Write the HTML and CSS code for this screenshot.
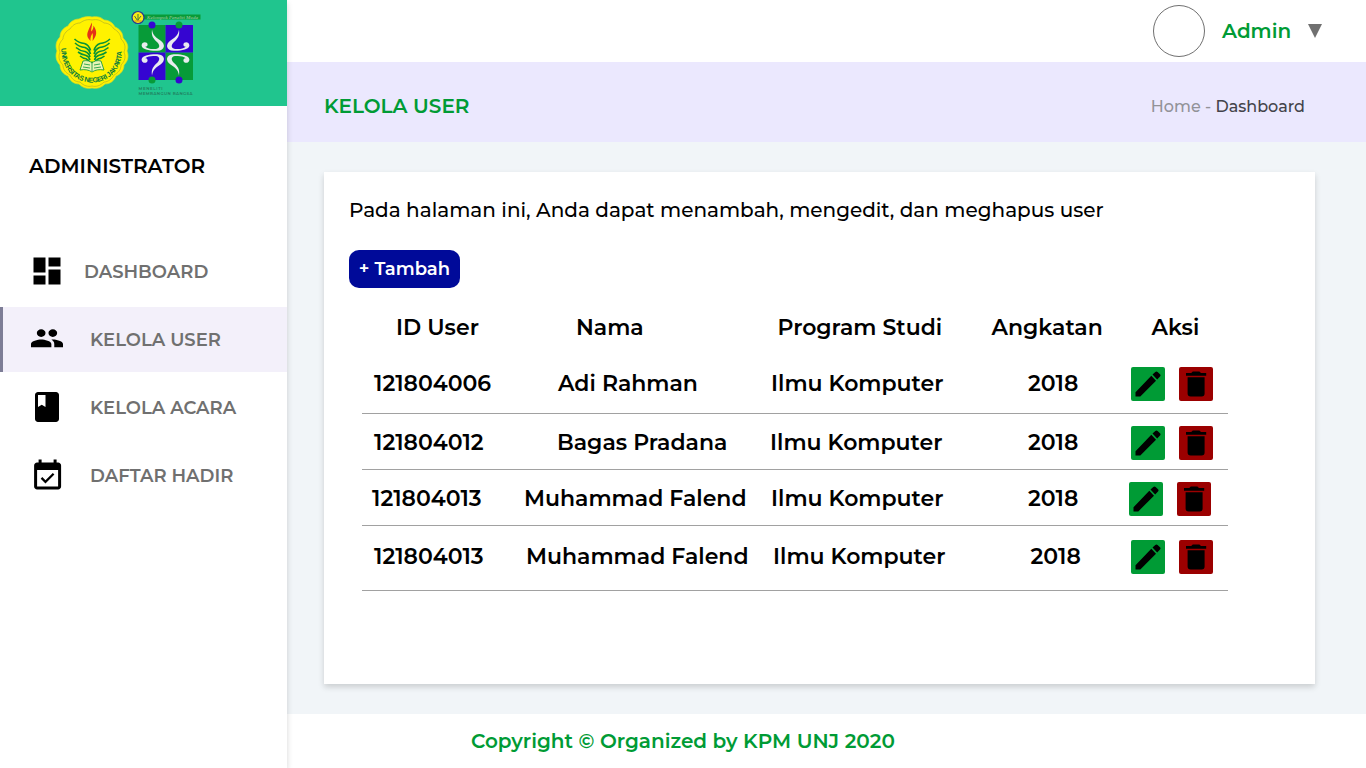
FILE: index.html
```html
<!DOCTYPE html>
<html lang="id">
<head>
<meta charset="utf-8">
<title>Kelola User</title>
<link rel="stylesheet" href="styles.css">
</head>
<body>
<svg width="0" height="0" class="sprite">
  <symbol id="pencil" viewBox="0 0 34 34"><path d="M4.500 25.200v4.200h4.800L25 13.700l-4.700-4.900zM21.500 7.500l4.700 4.900 2.800-2.900c.7-.7.7-1.500 0-2.200l-2.400-2.400c-.7-.7-1.600-.7-2.300 0z"/></symbol>
  <symbol id="trash" viewBox="0 0 34 34"><path d="M8.600 10.300h17v16.200a3 3 0 0 1-3 3h-11a3 3 0 0 1-3-3zM7 6h5.200l1.600-1.500h6.600L22 6h5.200v2.700H7z"/></symbol>
</svg>
<div class="app">
  <aside class="sidebar">
    <div class="brand">
      <svg width="287" height="106" viewBox="0 0 287 106">
        <defs>
          <path id="arc" d="M61.500 47C60 66 73 82.500 92 82.500S124 66 121.500 47"/>
          <path id="leaf" fill="none" stroke="#079437" stroke-width="1.600" d="M74.500 39q4 4 10 4.500 4.500 1.500 6 7M75 43q4 4 10 4.500 4 1.500 5.500 6.500M76 47.500q4 3.500 9 4 4 1.500 5 5.500M78 52q4 3 7.500 3.300 3.500 1 4.500 4.700M80 56q3 2.500 6 2.700 2.500 1 4 4.300"/>
        </defs>
        <path class="seal" d="M92 17c5-1 9 0 12 3 5 0 9 3 11 7 5 2 8 6 8 11 4 4 6 8 4 13 2 5 1 10-3 14 0 5-3 9-8 11-2 5-6 8-11 8-4 4-8 5-13 4-5 1-9 0-13-4-5 0-9-3-11-8-5-2-8-6-8-11-4-4-5-9-3-14-2-5-1-10 3-14 0-5 3-9 8-11 2-4 6-7 11-7 4-2 8-3 13-2z"/>
        <path class="seal-line" d="M92 20c5-1 8 0 12 3 5 0 8 3 10 6 4 2 7 6 7 10 4 4 5 8 3 13 2 5 1 9-3 13 0 5-3 8-7 10-2 4-6 7-10 7-4 4-8 5-12 4-4 1-8 0-12-4-5 0-8-3-10-7-4-2-7-5-7-10-4-4-5-8-3-13-2-5-1-9 3-13 0-4 3-8 7-10 2-3 5-6 10-6 4-3 8-4 12-3z"/>
        <use href="#leaf"/><use href="#leaf" transform="translate(184.500) scale(-1 1)"/>
        <path fill="#e53217" d="M90.500 41c-6-6-2.500-9 1.300-18.500.7 4-1.300 6-.3 9 1-2 2-3 2-6 4 6 3.500 10-1 15.500.5-3 .4-5 .1-8-1.400 2-2.500 4.800-2.100 8z"/>
        <path d="M83 61c4-1 7 0 9 2 2-2 5-3 9-2l3 9c-5-1-9 0-12 2-3-2-7-3-12-2z" fill="#e9f4b5" stroke="#079437" stroke-width=".8"/><path d="M92 61v10M84 64l6 1M83 67l7 1M94 65l6-1M94 68l7-1" stroke="#079437" stroke-width=".8"/>
        <text class="seal-text"><textPath href="#arc" textLength="100" startOffset="1">UNIVERSITAS NEGERI JAKARTA</textPath></text>
        <path fill="#089b37" d="M144 14.500h56.500v5H144z"/>
        <text class="banner-text" x="147" y="19" textLength="51" lengthAdjust="spacingAndGlyphs">Kelompok Peneliti Muda</text>
        <circle cx="138" cy="17.500" r="6" fill="#f9ea17" stroke="#253594" stroke-width="1.200"/><path d="M134.500 16l3 4.500 3.500-4.500M138 14v7" fill="none" stroke="#477734"/><path d="M134.500 21h7" stroke="#dda815" stroke-width="1.400"/>
        <path fill="#079b38" d="M138.500 25h27v27.500h-27zM165.500 52.500H193V80h-27.500z"/>
        <path fill="#3505d1" d="M165.500 25H193v27.500h-27.500zM138.500 52.500h27V80h-27z"/>
        <g fill="#e9ecef">
          <path id="fig" d="M152 29.500c.8 6 4.500 8.500 8.500 11 5.200 3.500 4.800 10-3 10.300-7 .3-15.700-1-15.900-5.200-.1-4.300 5.900-4.400 6-1 .1 1.700-1.400 2.300-2.400 2.200 2.500 2.200 7 2.600 10.800 2.100 4.200-.6 3.900-3.900 1.500-6.400-3.800-3.700-6.500-6-5.500-13z"/>
          <use href="#fig" transform="translate(331) scale(-1 1)"/>
          <use href="#fig" transform="translate(0 105) scale(1 -1)"/>
          <use href="#fig" transform="translate(331 105) scale(-1 -1)"/>
        </g>
        <circle cx="152" cy="25" r="3.500" fill="#3505d1"/><circle cx="179" cy="25" r="3.500" fill="#079b38"/><circle cx="152" cy="80" r="3.500" fill="#079b38"/><circle cx="179" cy="80" r="3.500" fill="#3505d1"/>
        <text class="motto" x="138.500" y="90" textLength="24">MENELITI</text><text class="motto" x="138.500" y="95" textLength="54">MEMBANGUN BANGSA</text>
      </svg>
    </div>
    <h2 class="role">ADMINISTRATOR</h2>
    <nav class="nav">
      <a class="nav-item first"><svg width="36" height="36" viewBox="0 0 36 36"><path d="M4.500 4.500h12v15h-12zM19.500 4.500h12v9h-12zM4.500 22.500h12v9h-12zM19.500 16.500h12v15h-12z"/></svg><span>DASHBOARD</span></a>
      <a class="nav-item active"><svg width="36" height="36" viewBox="0 0 24 24"><path d="M16 11c1.660 0 2.990-1.340 2.990-3S17.660 5 16 5s-3 1.340-3 3 1.340 3 3 3zm-8 0c1.660 0 2.990-1.340 2.990-3S9.660 5 8 5 5 6.340 5 8s1.340 3 3 3zm0 2c-2.330 0-7 1.170-7 3.500V19h14v-2.500c0-2.330-4.670-3.500-7-3.500zm8 0c-.29 0-.62.02-.97.05 1.160.84 1.970 1.970 1.970 3.450V19h6v-2.500c0-2.330-4.670-3.500-7-3.500z" transform="matrix(.97 0 0 .86 .36 1.800)"/></svg><span>KELOLA USER</span></a>
      <a class="nav-item raised"><svg width="36" height="36" viewBox="0 0 24 24"><path d="M18 2H6c-1.100 0-2 .9-2 2v16c0 1.100.9 2 2 2h12c1.100 0 2-.9 2-2V4c0-1.100-.9-2-2-2zM6 4h5v8l-2.500-1.500L6 12z"/></svg><span>KELOLA ACARA</span></a>
      <a class="nav-item raised"><svg width="36" height="36" viewBox="0 0 24 24"><path d="M16.530 11.060L15.470 10l-4.880 4.880-2.120-2.120-1.060 1.060L10.590 17l5.940-5.940zM19 3h-1V1h-2v2H8V1H6v2H5c-1.110 0-1.990.9-1.990 2L3 19c0 1.100.89 2 2 2h14c1.100 0 2-.9 2-2V5c0-1.100-.9-2-2-2zm0 16H5V8h14v11z" transform="translate(.4 .6)"/></svg><span>DAFTAR HADIR</span></a>
    </nav>
  </aside>
  <main class="main">
    <header class="topbar"><span class="avatar"></span><span class="admin">Admin</span><svg width="14" height="14"><path d="M0 0h14L7 14z" fill="#707070"/></svg></header>
    <div class="titlebar"><h1>KELOLA USER</h1><p class="crumbs"><span>Home - </span>Dashboard</p></div>
    <section class="content"><div class="card">
      <p class="intro">Pada halaman ini, Anda dapat menambah, mengedit, dan meghapus user</p>
      <button class="add">+ Tambah</button>
      <div class="table">
        <div class="row head"><span class="h-id">ID User</span><span class="h-name">Nama</span><span class="h-prog">Program Studi</span><span class="h-year">Angkatan</span><span class="h-act">Aksi</span></div>
        <div class="row r1"><span class="id">121804006</span><span class="name adi">Adi Rahman</span><span class="prog">Ilmu Komputer</span><span class="year">2018</span><span class="actions"><b class="edit"><svg><use href="#pencil"/></svg></b><b class="delete"><svg><use href="#trash"/></svg></b></span></div>
        <div class="row r2"><span class="id">121804012</span><span class="name bagas">Bagas Pradana</span><span class="prog">Ilmu Komputer</span><span class="year">2018</span><span class="actions"><b class="edit"><svg><use href="#pencil"/></svg></b><b class="delete"><svg><use href="#trash"/></svg></b></span></div>
        <div class="row r3"><span class="id">121804013</span><span class="name">Muhammad Falend</span><span class="prog">Ilmu Komputer</span><span class="year">2018</span><span class="actions"><b class="edit"><svg><use href="#pencil"/></svg></b><b class="delete"><svg><use href="#trash"/></svg></b></span></div>
        <div class="row r4"><span class="id">121804013</span><span class="name">Muhammad Falend</span><span class="prog">Ilmu Komputer</span><span class="year">2018</span><span class="actions"><b class="edit"><svg><use href="#pencil"/></svg></b><b class="delete"><svg><use href="#trash"/></svg></b></span></div>
      </div>
    </div></section>
    <footer class="footer">Copyright © Organized by KPM UNJ 2020</footer>
  </main>
</div>
</body>
</html>
```
FILE: styles.css
```css
* { box-sizing: border-box; margin: 0; }
body { font-family: Montserrat, Inter, "Open Sans", sans-serif; font-weight: 600; color: #000; overflow: hidden; }
.sprite { position: absolute; }
.app { display: flex; width: 1366px; height: 768px; }
.sidebar { width: 287px; flex: none; background: #fff; box-shadow: 0 3px 6px rgba(0,0,0,.16); z-index: 1; }
.brand { height: 106px; background: #20c58e; }
.brand svg { display: block; }
.seal { fill: #fff200; stroke: #d6d82c; stroke-width: .7; }
.seal-line { fill: none; stroke: #a8a82a; stroke-width: .6; }
.seal-text { font: 700 7px "Liberation Sans", sans-serif; fill: #087c3b; }
.banner-text { font: italic 5px "Liberation Serif", serif; fill: #a8cfae; }
.motto { font-size: 4px; font-weight: 600; fill: #20805f; }
.role { font-size: 20px; font-weight: 600; line-height: 24px; padding: 48px 0 0 29px; white-space: nowrap; }
.nav { margin-top: 59px; }
.nav-item { display: flex; align-items: center; height: 65px; margin-bottom: 3px; padding-left: 29px; font-size: 18px; color: #707070; white-space: nowrap; }
.nav-item svg { margin-right: 25px; }
.nav-item.first { height: 68px; margin-bottom: 2px; }
.nav-item.first svg { margin-right: 19px; }
.nav-item.first span { padding-top: 2px; }
.nav-item.active { background: #f3f0fa; border-left: 3px solid #7d7d96; padding-left: 26px; }
.nav-item.active svg { margin-top: -3px; }
.nav-item.raised svg { margin-top: -2px; }
.main { flex: 1; display: flex; flex-direction: column; background: #f1f5f8; min-width: 0; }
.topbar { height: 62px; display: flex; align-items: center; padding-left: 866px; background: #fff; }
.avatar { width: 52px; height: 52px; border: 1px solid #707070; border-radius: 50%; margin-right: 17px; }
.admin { width: 86px; font-size: 20px; color: #009b35; }
.titlebar { height: 80px; display: flex; align-items: center; padding: 8px 61px 0 37px; justify-content: space-between; background: #ebe8fe; white-space: nowrap; }
h1 { font-size: 20px; font-weight: 600; color: #009b35; }
.crumbs { font-size: 16px; font-weight: 500; color: #43434a; }
.crumbs span { color: #929298; }
.content { height: 572px; padding: 30px 51px 30px 37px; }
.card { height: 512px; padding: 25px 0 0 25px; background: #fff; box-shadow: 0 3px 6px rgba(0,0,0,.16); }
.intro { font-size: 20px; font-weight: 500; line-height: 26px; white-space: nowrap; }
.add { display: block; width: 111px; height: 38px; margin-top: 27px; border: 0; border-radius: 10px; padding: 0 0 1px; background: #000a99; color: #fff; font: 600 18px Montserrat, Inter, sans-serif; }
.table { margin: 20px 0 0 13px; width: 866px; font-size: 22px; }
.row { display: grid; grid-template-columns: 162px 246px 220px 139px 1fr; border-bottom: 1px solid #a1a1a1; line-height: 28px; white-space: nowrap; }
.head { height: 46px; padding-top: 6px; border: 0; }
.h-id { padding-left: 34px; }
.h-name { padding-left: 52px; }
.h-prog { padding-left: 7.500px; }
.h-year { padding-left: 1.500px; }
.h-act { padding-left: 22.500px; }
.r1 { height: 60px; padding-top: 16px; }
.r2 { height: 56px; padding-top: 15px; }
.r3 { height: 56px; padding-top: 15px; }
.r4 { height: 65px; padding-top: 17px; }
.id { padding-left: 12px; }
.adi { padding-left: 34px; }
.bagas { padding-left: 33px; }
.prog { padding-left: 1px; }
.r2 .prog { padding-left: 0; }
.year { padding-left: 38px; }
.actions { display: flex; gap: 14px; padding-left: 2px; margin-top: -3px; }
.r3 .id { padding-left: 10px; }
.r3 .actions { padding-left: 0; }
.r4 .name { padding-left: 2px; }
.r4 .prog { padding-left: 3px; }
.r4 .year { padding-left: 40.500px; }
.edit, .delete { width: 34px; height: 34px; border-radius: 2px; background: #009b35; }
.delete { background: #9b0000; }
.actions svg { display: block; width: 34px; height: 34px; }
.footer { height: 54px; padding-left: 184px; line-height: 54px; background: #fff; color: #009b35; font-size: 20px; white-space: nowrap; }
```
